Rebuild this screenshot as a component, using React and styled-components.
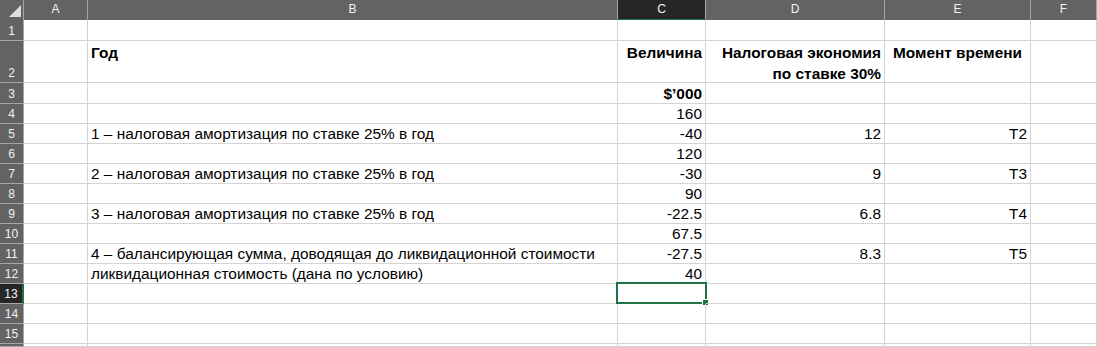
import React from 'react';
import styled, { createGlobalStyle } from 'styled-components';

const GlobalStyle = createGlobalStyle`
  html, body {
    margin: 0;
    padding: 0;
    background: #ffffff;
    overflow: hidden;
  }
`;

const Sheet = styled.div`
  display: grid;
  grid-template-columns: 24px 64px 530px 88px 179px 146px 66px;
  grid-template-rows: 20px 21px 42px 21px repeat(12, 20px);
  width: 1097px;
  height: 347px;
  overflow: hidden;
  font-family: "Liberation Sans", Arial, sans-serif;
  font-size: 15.4px;
  color: #000;
  background: #fff;
`;

const Corner = styled.div`
  background: #636363;
  border-right: 1px solid #a6a6a6;
  position: relative;
  &::after {
    content: '';
    position: absolute;
    right: 2px;
    bottom: 3px;
    width: 0;
    height: 0;
    border-left: 12px solid transparent;
    border-bottom: 12px solid #dedede;
  }
`;

const ColHeader = styled.div`
  background: ${p => (p.$active ? '#262626' : '#636363')};
  border-right: 1px solid #a6a6a6;
  border-bottom: 1px solid ${p => (p.$active ? '#217346' : '#636363')};
  color: #f2f2f2;
  font-family: "Liberation Sans", Arial, sans-serif;
  font-size: 12px;
  display: flex;
  align-items: center;
  justify-content: center;
  padding-bottom: 1px;
  box-sizing: border-box;
`;

const RowHeader = styled.div`
  background: ${p => (p.$active ? '#262626' : '#636363')};
  border-bottom: 1px solid #a6a6a6;
  border-right: ${p => (p.$active ? '2px solid #217346' : '1px solid #a6a6a6')};
  color: #f2f2f2;
  font-size: 12px;
  display: flex;
  align-items: flex-end;
  justify-content: center;
  padding-bottom: 2px;
  box-sizing: border-box;
`;

const Cell = styled.div`
  border-right: 1px solid #d4d4d4;
  border-bottom: 1px solid #d4d4d4;
  box-sizing: border-box;
  display: flex;
  flex-direction: column;
  justify-content: ${p => (p.$top ? 'flex-start' : 'flex-end')};
  text-align: ${p => p.$align || 'left'};
  font-weight: ${p => (p.$bold ? 700 : 400)};
  padding: ${p => (p.$top ? '1px 3px 0 3px' : '0 3px 0 3px')};
  line-height: ${p => (p.$top ? '21px' : '18px')};
  white-space: nowrap;
  position: relative;
  overflow: visible;
`;

const Selection = styled.div`
  position: absolute;
  left: -2px;
  top: -2px;
  right: -2px;
  bottom: -1px;
  border: 2px solid #217346;
  pointer-events: none;
  &::after {
    content: '';
    position: absolute;
    right: -4px;
    bottom: -4px;
    width: 5px;
    height: 5px;
    background: #217346;
    border: 1px solid #fff;
  }
`;

const cols = ['A', 'B', 'C', 'D', 'E', 'F'];

const R = t => ({ t, a: 'right' });

const rows = [
  { n: 1, cells: {} },
  {
    n: 2,
    top: true,
    bold: true,
    cells: {
      B: 'Год',
      C: R('Величина'),
      D: R(['Налоговая экономия', 'по ставке 30%']),
      E: { t: 'Момент времени', a: 'center' },
    },
  },
  { n: 3, bold: true, cells: { C: R('$’000') } },
  { n: 4, cells: { C: R('160') } },
  {
    n: 5,
    cells: {
      B: '1 – налоговая амортизация по ставке 25% в год',
      C: R('-40'),
      D: R('12'),
      E: R('T2'),
    },
  },
  { n: 6, cells: { C: R('120') } },
  {
    n: 7,
    cells: {
      B: '2 – налоговая амортизация по ставке 25% в год',
      C: R('-30'),
      D: R('9'),
      E: R('T3'),
    },
  },
  { n: 8, cells: { C: R('90') } },
  {
    n: 9,
    cells: {
      B: '3 – налоговая амортизация по ставке 25% в год',
      C: R('-22.5'),
      D: R('6.8'),
      E: R('T4'),
    },
  },
  { n: 10, cells: { C: R('67.5') } },
  {
    n: 11,
    cells: {
      B: '4 – балансирующая сумма, доводящая до ликвидационной стоимости',
      C: R('-27.5'),
      D: R('8.3'),
      E: R('T5'),
    },
  },
  {
    n: 12,
    cells: {
      B: 'ликвидационная стоимость (дана по условию)',
      C: R('40'),
    },
  },
  { n: 13, active: true, cells: {} },
  { n: 14, cells: {} },
  { n: 15, cells: {} },
  { n: 16, hideNum: true, cells: {} },
];

export default function App() {
  return (
    <>
      <GlobalStyle />
      <Sheet>
        <Corner />
        {cols.map(c => (
          <ColHeader key={c} $active={c === 'C'}>{c}</ColHeader>
        ))}
        {rows.map(row => (
          <React.Fragment key={row.n}>
            <RowHeader $active={row.active}>{row.hideNum ? '' : row.n}</RowHeader>
            {cols.map(c => {
              const raw = row.cells[c];
              const val = raw && typeof raw === 'object' && !Array.isArray(raw) ? raw : { t: raw };
              const lines = Array.isArray(val.t) ? val.t : val.t ? [val.t] : [];
              return (
                <Cell key={c} $top={row.top} $bold={row.bold} $align={val.a}>
                  {lines.map((l, i) => (
                    <span key={i}>{l}</span>
                  ))}
                  {row.active && c === 'C' && <Selection />}
                </Cell>
              );
            })}
          </React.Fragment>
        ))}
      </Sheet>
    </>
  );
}
